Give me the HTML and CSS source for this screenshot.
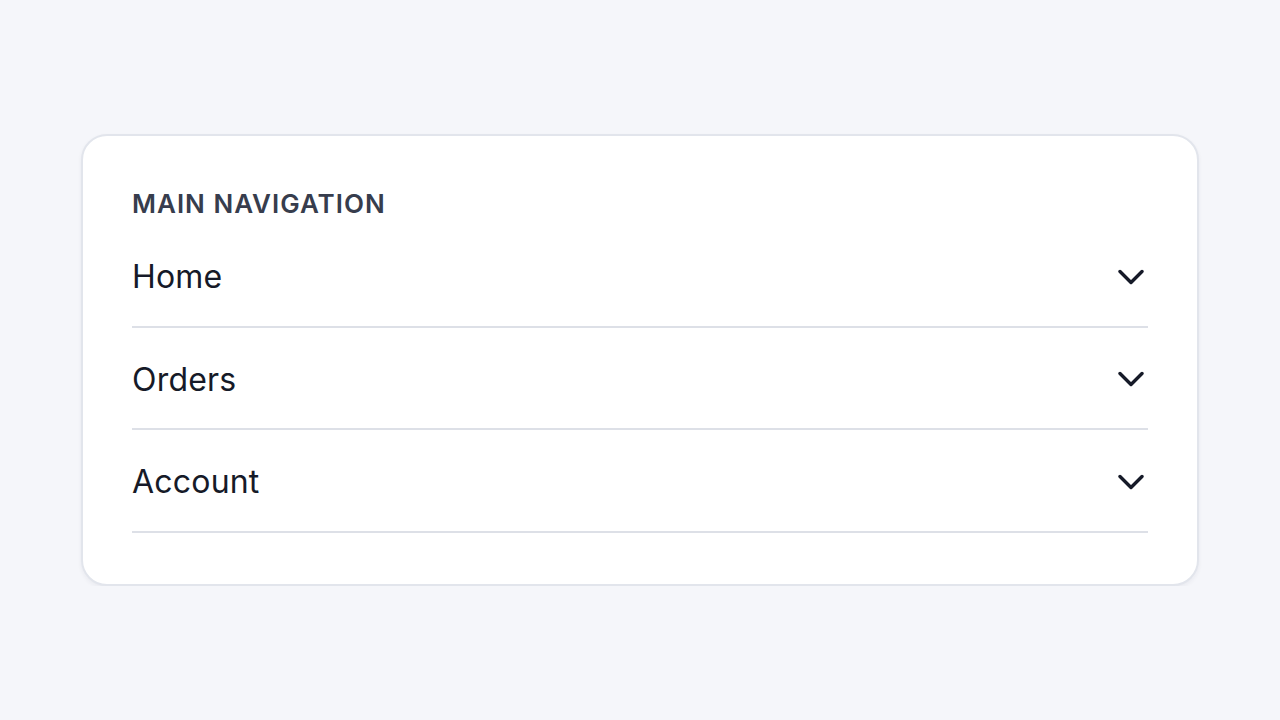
FILE: index.html
```html
<!doctype html>
<html lang="en">
<head>
    <meta charset="UTF-8">
    <title>Main navigation</title>
    <link rel="stylesheet" href="styles.css">
</head>
<body>
<div class="page">
    <nav class="card">
        <div class="title">MAIN NAVIGATION</div>
        <div class="row">
            <span class="label">Home</span>
            <svg class="chevron" viewBox="0 0 26 16"><path d="M2 2.5L13 13.5 24 2.5"/></svg>
        </div>
        <div class="row">
            <span class="label">Orders</span>
            <svg class="chevron" viewBox="0 0 26 16"><path d="M2 2.5L13 13.5 24 2.5"/></svg>
        </div>
        <div class="row">
            <span class="label">Account</span>
            <svg class="chevron" viewBox="0 0 26 16"><path d="M2 2.5L13 13.5 24 2.5"/></svg>
        </div>
    </nav>
</div>
</body>
</html>
```

FILE: styles.css
```css
body {
    margin: 0;
    padding: 0;
    background: #f5f6fa;
    font-family: Inter, "Noto Sans", sans-serif;
}

.page {
    padding: 134px 81px 0;
}

.card {
    background: #fff;
    border: 2px solid #e2e5ec;
    border-radius: 26px;
    padding: 50px 49px 51px;
    box-shadow: 0 2px 4px rgba(30, 40, 70, 0.06);
}

.title {
    font-size: 26px;
    font-weight: 600;
    color: #373d4d;
    letter-spacing: 1px;
    line-height: 36px;
    margin-bottom: 3px;
}

.row {
    display: flex;
    align-items: center;
    justify-content: space-between;
    height: 97.5px;
    padding-top: 3px;
    border-bottom: 2px solid #dde0e7;
}

.label {
    font-size: 32px;
    letter-spacing: 0.2px;
    color: #161a28;
}

.chevron {
    width: 26px;
    height: 16px;
    margin-right: 4px;
    fill: none;
    stroke: #161a28;
    stroke-width: 3.4;
    stroke-linecap: round;
    stroke-linejoin: round;
}
```
